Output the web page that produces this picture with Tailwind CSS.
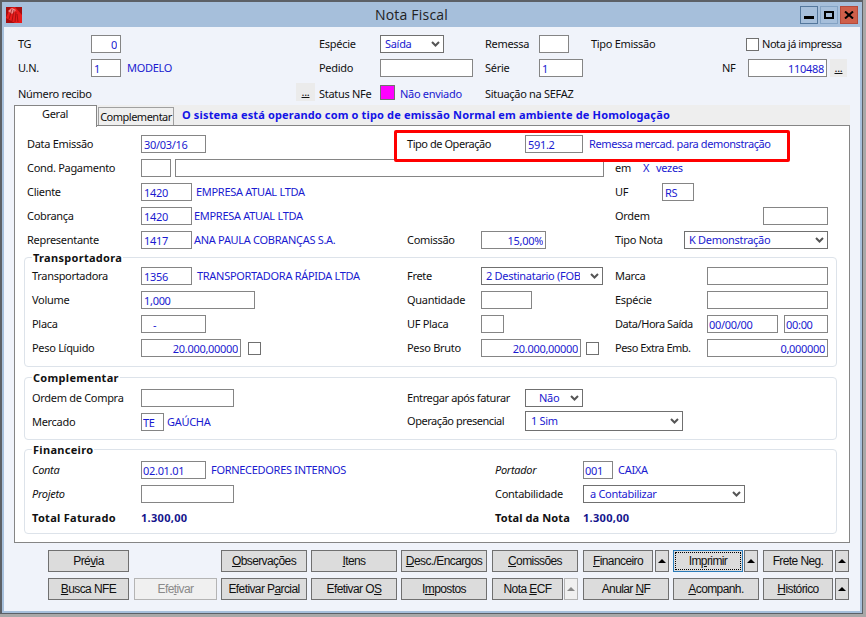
<!DOCTYPE html>
<html lang="pt-BR">
<head>
<meta charset="UTF-8">
<title>Nota Fiscal</title>
<script src="https://cdn.jsdelivr.net/npm/@tailwindcss/browser@4"></script>
</head>
<body class="w-[866px] h-[617px] overflow-hidden bg-[#a8a8a8] font-['Noto_Sans',sans-serif] text-[11px] leading-[14px] tracking-[-0.3px] text-[#111]">
<div class="w-[863px] h-[614px] flex flex-col border-t-2 border-l-2 border-r border-b border-[#5c6066] bg-[#a6bfdb]">

  <!-- barra de titulo -->
  <div class="h-[25px] flex items-center shrink-0 pl-[4px]">
    <svg width="16" height="16" viewBox="0 0 16 16" class="shrink-0">
      <rect width="16" height="16" fill="#a80c0c"/>
      <path d="M0 11 L4 1 L9 0 L16 8 V16 H9 Z" fill="#e81c1c"/>
      <path d="M2 4 L6 1 L10 3 L6 7 Z" fill="#f58a8a"/>
      <path d="M3 12 L6 2 M6 14 L8 3 M9 15 L10 5 M12 15 L11 7" stroke="#7a0606" stroke-width="0.6" fill="none"/>
    </svg>
    <div class="ml-[353px] w-[425px] text-[14px] tracking-[0.2px] text-[#222] font-['Open_Sans',sans-serif]">Nota Fiscal</div>
    <div class="flex gap-[2px]">
      <div class="w-[18px] h-[18px] border border-[#54779c] flex items-end justify-center pb-[4px]"><div class="w-[10px] h-[3px] bg-black"></div></div>
      <div class="w-[18px] h-[18px] border border-[#84a3c4] flex items-center justify-center"><div class="w-[10px] h-[8px] border-2 border-black"></div></div>
      <div class="w-[18px] h-[18px] border border-[#b5493a] bg-[#cf5f4a] flex items-center justify-center">
        <svg width="10" height="8" viewBox="0 0 10 8"><path d="M1 0.5 L9 7.5 M9 0.5 L1 7.5" stroke="#000" stroke-width="2"/></svg>
      </div>
    </div>
  </div>

  <div class="flex-1 mx-[2px] mb-[2px] bg-[#f0f3fa]">
    <!-- cabecalho -->
    <div class="pt-[8px] pl-[14px]">
      <div class="flex items-center h-[18px]">
        <span class="w-[73px]">TG</span>
        <input value="0" class="w-[30px] h-[18px] border border-[#858585] bg-white px-[3px] text-right text-[#1a1ad0]">
        <span class="ml-[198px] w-[61px]">Espécie</span>
        <div class="w-[64px] h-[18px] border border-[#707070] bg-white pl-[4px] pr-[3px] flex items-center justify-between text-[#1a1ad0]">Saída
          <svg width="9" height="6" viewBox="0 0 9 6"><path d="M1 1 L4.5 4.5 L8 1" stroke="#555" stroke-width="2" fill="none"/></svg>
        </div>
        <span class="ml-[41px] w-[54px]">Remessa</span>
        <input class="w-[30px] h-[18px] border border-[#858585] bg-white">
        <span class="ml-[22px] w-[155px]">Tipo Emissão</span>
        <span class="w-[13px] h-[13px] border border-[#707070] bg-white"></span>
        <span class="ml-[3px] tracking-[-0.45px]">Nota já impressa</span>
      </div>
      <div class="flex items-center h-[18px] mt-[6px]">
        <span class="w-[73px]">U.N.</span>
        <input value="1" class="w-[30px] h-[18px] border border-[#858585] bg-white px-[2px] text-[#1a1ad0]">
        <span class="ml-[6px] w-[192px] text-[#1a1ad0]">MODELO</span>
        <span class="w-[61px]">Pedido</span>
        <input class="w-[93px] h-[18px] border border-[#858585] bg-white">
        <span class="ml-[12px] w-[54px]">Série</span>
        <input value="1" class="w-[44px] h-[18px] border border-[#858585] bg-white px-[2px] text-[#1a1ad0]">
        <span class="ml-[139px] w-[26px]">NF</span>
        <input value="110488" class="w-[79px] h-[18px] border border-[#858585] bg-white px-[2px] text-right text-[#1a1ad0]">
        <button class="ml-[3px] w-[17px] h-[18px] bg-[#ebebeb] underline">...</button>
      </div>
      <div class="flex items-center h-[18px] mt-[8px]">
        <span class="w-[278px]">Número recibo</span>
        <button class="w-[19px] h-[18px] -mt-[4px] bg-[#ebebeb] underline">...</button>
        <span class="ml-[4px] w-[61px]">Status NFe</span>
        <span class="w-[15px] h-[15px] self-start border border-[#707070] bg-[#ff00ff]"></span>
        <span class="ml-[5px] w-[85px] text-[#1a1ad0]">Não enviado</span>
        <span>Situação na SEFAZ</span>
      </div>
    </div>

    <!-- abas -->
    <div class="ml-[10px] w-[836px] mt-[2px] h-[20px] bg-[#eeeeee] flex items-start relative">
      <div class="w-[83px] h-[22px] bg-white border border-b-0 border-[#858585] z-10 relative pl-[27px] pt-[1px]">Geral</div>
      <div class="ml-[1px] mt-[2px] w-[76px] h-[18px] bg-[#efefef] border border-b-0 border-[#a0a0a0] text-center pt-[2px] tracking-[-0.5px]">Complementar</div>
      <div class="ml-[8px] mt-[3px] font-bold tracking-[0.15px] text-[#1414e6]">O sistema está operando com o tipo de emissão Normal em ambiente de Homologação</div>
    </div>

    <!-- pagina -->
    <div class="relative ml-[10px] w-[836px] h-[418px] border border-[#858585] bg-white pt-[9px]">
      <div class="absolute left-[379px] top-[4px] w-[396px] h-[32px] border-[3px] border-[#ff0000] rounded-[2px] pointer-events-none"></div>
      <div class="pl-[12px]">
        <div class="flex items-center h-[18px]">
          <span class="w-[114px]">Data Emissão</span>
          <input value="30/03/16" class="w-[65px] h-[18px] border border-[#858585] bg-white px-[2px] text-[#1a1ad0]">
          <span class="ml-[201px] w-[118px] tracking-[-0.45px]">Tipo de Operação</span>
          <input value="591.2" class="w-[58px] h-[18px] border border-[#858585] bg-white px-[2px] text-[#1a1ad0]">
          <span class="ml-[6px] tracking-[-0.4px] text-[#1a1ad0]">Remessa mercad. para demonstração</span>
        </div>
        <div class="flex items-center h-[18px] mt-[6px]">
          <span class="w-[114px]">Cond. Pagamento</span>
          <input class="w-[30px] h-[18px] border border-[#858585] bg-white">
          <input class="ml-[4px] w-[429px] h-[18px] border border-[#858585] bg-white">
          <span class="ml-[11px] w-[28px]">em</span>
          <span class="w-[13px] text-[#1a1ad0]">X</span>
          <span class="text-[#1a1ad0]">vezes</span>
        </div>
        <div class="flex items-center h-[18px] mt-[6px]">
          <span class="w-[114px]">Cliente</span>
          <input value="1420" class="w-[51px] h-[18px] border border-[#858585] bg-white px-[2px] text-[#1a1ad0]">
          <span class="w-[423px] pl-[4px] text-[#1a1ad0]">EMPRESA ATUAL LTDA</span>
          <span class="w-[47px]">UF</span>
          <input value="RS" class="w-[32px] h-[18px] border border-[#858585] bg-white px-[2px] text-[#1a1ad0]">
        </div>
        <div class="flex items-center h-[18px] mt-[6px]">
          <span class="w-[114px]">Cobrança</span>
          <input value="1420" class="w-[51px] h-[18px] border border-[#858585] bg-white px-[2px] text-[#1a1ad0]">
          <span class="w-[423px] pl-[2px] text-[#1a1ad0]">EMPRESA ATUAL LTDA</span>
          <span class="w-[148px]">Ordem</span>
          <input class="w-[65px] h-[18px] border border-[#858585] bg-white">
        </div>
        <div class="flex items-center h-[18px] mt-[6px]">
          <span class="w-[114px]">Representante</span>
          <input value="1417" class="w-[51px] h-[18px] border border-[#858585] bg-white px-[2px] text-[#1a1ad0]">
          <span class="w-[215px] pl-[2px] text-[#1a1ad0]">ANA PAULA COBRANÇAS S.A.</span>
          <span class="w-[74px]">Comissão</span>
          <input value="15,00%" class="w-[65px] h-[18px] border border-[#858585] bg-white px-[2px] text-right text-[#1a1ad0]">
          <span class="ml-[69px] w-[69px]">Tipo Nota</span>
          <div class="w-[144px] h-[18px] border border-[#707070] bg-white pl-[4px] pr-[3px] flex items-center justify-between text-[#1a1ad0]">K Demonstração
            <svg width="9" height="6" viewBox="0 0 9 6"><path d="M1 1 L4.5 4.5 L8 1" stroke="#555" stroke-width="2" fill="none"/></svg>
          </div>
        </div>
      </div>

      <!-- Transportadora -->
      <div class="relative ml-[9px] mt-[8px] w-[813px] h-[110px] border border-[#dde3ea] rounded-[4px] pt-[9px] pl-[7px]">
        <div class="absolute -top-[7px] left-[7px] px-[1px] bg-white font-bold tracking-[0.3px]">Transportadora</div>
        <div class="flex items-center h-[18px]">
          <span class="w-[109px]">Transportadora</span>
          <input value="1356" class="w-[51px] h-[18px] border border-[#858585] bg-white px-[2px] text-[#1a1ad0]">
          <span class="w-[215px] pl-[5px] text-[#1a1ad0]">TRANSPORTADORA RÁPIDA LTDA</span>
          <span class="w-[74px]">Frete</span>
          <div class="w-[122px] h-[18px] border border-[#707070] bg-white pl-[4px] pr-[3px] flex items-center justify-between text-[#1a1ad0]"><span class="w-[94px] overflow-hidden whitespace-nowrap">2 Destinatario (FOB)</span>
            <svg width="9" height="6" viewBox="0 0 9 6"><path d="M1 1 L4.5 4.5 L8 1" stroke="#555" stroke-width="2" fill="none"/></svg>
          </div>
          <span class="ml-[12px] w-[92px]">Marca</span>
          <input class="w-[121px] h-[18px] border border-[#858585] bg-white">
        </div>
        <div class="flex items-center h-[18px] mt-[6px]">
          <span class="w-[109px]">Volume</span>
          <input value="1,000" class="w-[114px] h-[18px] border border-[#858585] bg-white px-[2px] text-[#1a1ad0]">
          <span class="ml-[152px] w-[74px]">Quantidade</span>
          <input class="w-[51px] h-[18px] border border-[#858585] bg-white">
          <span class="ml-[83px] w-[92px]">Espécie</span>
          <input class="w-[121px] h-[18px] border border-[#858585] bg-white">
        </div>
        <div class="flex items-center h-[18px] mt-[6px]">
          <span class="w-[109px]">Placa</span>
          <input value="-" class="w-[65px] h-[18px] border border-[#858585] bg-white pl-[11px] text-[#1a1ad0]">
          <span class="ml-[201px] w-[74px]">UF Placa</span>
          <input class="w-[23px] h-[18px] border border-[#858585] bg-white">
          <span class="ml-[111px] w-[92px] tracking-[-0.45px]">Data/Hora Saída</span>
          <input value="00/00/00" class="w-[71px] h-[18px] border border-[#858585] bg-white px-[1px] text-[#1a1ad0]">
          <input value="00:00" class="ml-[6px] w-[44px] h-[18px] border border-[#858585] bg-white px-[1px] text-[#1a1ad0]">
        </div>
        <div class="flex items-center h-[18px] mt-[6px]">
          <span class="w-[109px]">Peso Líquido</span>
          <input value="20.000,00000" class="w-[100px] h-[18px] border border-[#858585] bg-white px-[2px] text-right text-[#1a1ad0]">
          <span class="ml-[7px] w-[13px] h-[13px] border border-[#707070] bg-white"></span>
          <span class="ml-[146px] w-[74px]">Peso Bruto</span>
          <input value="20.000,00000" class="w-[100px] h-[18px] border border-[#858585] bg-white px-[2px] text-right text-[#1a1ad0]">
          <span class="ml-[5px] w-[13px] h-[13px] border border-[#707070] bg-white"></span>
          <span class="ml-[16px] w-[92px] tracking-[-0.5px]">Peso Extra Emb.</span>
          <input value="0,000000" class="w-[121px] h-[18px] border border-[#858585] bg-white px-[2px] text-right text-[#1a1ad0]">
        </div>
      </div>

      <!-- Complementar -->
      <div class="relative ml-[9px] mt-[10px] w-[813px] h-[63px] border border-[#dde3ea] rounded-[4px] pt-[11px] pl-[7px]">
        <div class="absolute -top-[7px] left-[7px] px-[1px] bg-white font-bold tracking-[0.3px]">Complementar</div>
        <div class="flex items-center h-[18px]">
          <span class="w-[109px]">Ordem de Compra</span>
          <input class="w-[93px] h-[18px] border border-[#858585] bg-white">
          <span class="ml-[173px] w-[118px] tracking-[-0.4px]">Entregar após faturar</span>
          <div class="w-[58px] h-[18px] border border-[#707070] bg-white pl-[13px] pr-[3px] flex items-center justify-between text-[#1a1ad0]">Não
            <svg width="9" height="6" viewBox="0 0 9 6"><path d="M1 1 L4.5 4.5 L8 1" stroke="#555" stroke-width="2" fill="none"/></svg>
          </div>
        </div>
        <div class="flex items-center h-[20px] mt-[4px]">
          <span class="w-[109px] mt-[2px]">Mercado</span>
          <input value="TE" class="w-[23px] h-[18px] self-end border border-[#858585] bg-white px-[1px] text-[#1a1ad0]">
          <span class="w-[243px] pl-[3px] mt-[2px] text-[#1a1ad0]">GAÚCHA</span>
          <span class="w-[118px] tracking-[-0.45px]">Operação presencial</span>
          <div class="w-[158px] h-[20px] border border-[#707070] bg-white pl-[5px] pr-[3px] flex items-center justify-between text-[#1a1ad0]">1 Sim
            <svg width="9" height="6" viewBox="0 0 9 6"><path d="M1 1 L4.5 4.5 L8 1" stroke="#555" stroke-width="2" fill="none"/></svg>
          </div>
        </div>
      </div>

      <!-- Financeiro -->
      <div class="relative ml-[9px] mt-[9px] w-[813px] h-[85px] border border-[#dde3ea] rounded-[4px] pt-[11px] pl-[7px]">
        <div class="absolute -top-[7px] left-[7px] px-[1px] bg-white font-bold tracking-[0.3px]">Financeiro</div>
        <div class="flex items-center h-[18px]">
          <span class="w-[109px] italic">Conta</span>
          <input value="02.01.01" class="w-[65px] h-[18px] border border-[#858585] bg-white px-[1px] text-[#1a1ad0]">
          <span class="w-[289px] pl-[5px] text-[#1a1ad0]">FORNECEDORES INTERNOS</span>
          <span class="w-[88px] italic">Portador</span>
          <input value="001" class="w-[30px] h-[18px] border border-[#858585] bg-white px-[1px] text-[#1a1ad0]">
          <span class="pl-[5px] text-[#1a1ad0]">CAIXA</span>
        </div>
        <div class="flex items-center h-[18px] mt-[6px]">
          <span class="w-[109px] italic">Projeto</span>
          <input class="w-[93px] h-[18px] border border-[#858585] bg-white">
          <span class="ml-[261px] w-[88px]">Contabilidade</span>
          <div class="w-[162px] h-[18px] border border-[#707070] bg-white pl-[6px] pr-[3px] flex items-center justify-between text-[#1a1ad0]">a Contabilizar
            <svg width="9" height="6" viewBox="0 0 9 6"><path d="M1 1 L4.5 4.5 L8 1" stroke="#555" stroke-width="2" fill="none"/></svg>
          </div>
        </div>
        <div class="flex items-center h-[18px] mt-[6px] font-bold tracking-[0.3px]">
          <span class="w-[109px]">Total Faturado</span>
          <span class="w-[354px] text-[#14148c]">1.300,00</span>
          <span class="w-[88px] tracking-[0.1px]">Total da Nota</span>
          <span class="text-[#14148c]">1.300,00</span>
        </div>
      </div>
    </div>

    <!-- botoes -->
    <div class="pl-[44px] pt-[7px] font-['Liberation_Sans',sans-serif] text-[12px] tracking-[-0.6px]">
      <div class="flex h-[22px]">
        <button class="w-[81px] border border-[#707070] bg-[#dcdcdc]">Pré<u>v</u>ia</button>
        <button class="ml-[92px] w-[86px] border border-[#707070] bg-[#dcdcdc]"><u>O</u>bservações</button>
        <button class="ml-[4px] w-[86px] border border-[#707070] bg-[#dcdcdc]"><u>I</u>tens</button>
        <button class="ml-[4px] w-[86px] border border-[#707070] bg-[#dcdcdc]"><u>D</u>esc./Encargos</button>
        <button class="ml-[5px] w-[86px] border border-[#707070] bg-[#dcdcdc]"><u>C</u>omissões</button>
        <button class="ml-[5px] w-[70px] border border-[#707070] bg-[#dcdcdc]"><u>F</u>inanceiro</button>
        <button class="ml-[2px] w-[14px] border border-[#707070] bg-[#dcdcdc] flex items-center justify-center"><svg width="8" height="4" viewBox="0 0 8 4"><path d="M4 0 L8 4 H0 Z" fill="#000"/></svg></button>
        <button class="ml-[4px] w-[70px] border border-[#2a7ab8] bg-[#dcdcdc] outline-1 outline-dotted outline-black [outline-offset:-3px]">Im<u>p</u>rimir</button>
        <button class="ml-[1px] w-[14px] border border-[#707070] bg-[#dcdcdc] flex items-center justify-center"><svg width="8" height="4" viewBox="0 0 8 4"><path d="M4 0 L8 4 H0 Z" fill="#000"/></svg></button>
        <button class="ml-[5px] w-[70px] border border-[#707070] bg-[#dcdcdc]">Frete Neg.</button>
        <button class="ml-[2px] w-[14px] border border-[#707070] bg-[#dcdcdc] flex items-center justify-center"><svg width="8" height="4" viewBox="0 0 8 4"><path d="M4 0 L8 4 H0 Z" fill="#000"/></svg></button>
      </div>
      <div class="flex h-[22px] mt-[6px]">
        <button class="w-[81px] border border-[#707070] bg-[#dcdcdc]"><u>B</u>usca NFE</button>
        <button class="ml-[5px] w-[83px] border border-[#b4b4b4] bg-[#f0f0f0] text-[#8a8a8a]">Efe<u>t</u>ivar</button>
        <button class="ml-[4px] w-[86px] border border-[#707070] bg-[#dcdcdc]">Efetivar P<u>a</u>rcial</button>
        <button class="ml-[4px] w-[86px] border border-[#707070] bg-[#dcdcdc]">Efetivar O<u>S</u></button>
        <button class="ml-[4px] w-[86px] border border-[#707070] bg-[#dcdcdc]">I<u>m</u>postos</button>
        <button class="ml-[5px] w-[71px] border border-[#707070] bg-[#dcdcdc]">Nota <u>E</u>CF</button>
        <button class="ml-[1px] w-[14px] border border-[#b4b4b4] bg-[#f0f0f0] flex items-center justify-center"><svg width="8" height="4" viewBox="0 0 8 4"><path d="M4 0 L8 4 H0 Z" fill="#8a8a8a"/></svg></button>
        <button class="ml-[5px] w-[86px] border border-[#707070] bg-[#dcdcdc]">Anular <u>N</u>F</button>
        <button class="ml-[4px] w-[86px] border border-[#707070] bg-[#dcdcdc]"><u>A</u>companh.</button>
        <button class="ml-[4px] w-[70px] border border-[#707070] bg-[#dcdcdc]"><u>H</u>istórico</button>
        <button class="ml-[2px] w-[14px] border border-[#707070] bg-[#dcdcdc] flex items-center justify-center"><svg width="8" height="4" viewBox="0 0 8 4"><path d="M4 0 L8 4 H0 Z" fill="#000"/></svg></button>
      </div>
    </div>
  </div>
</div>
</body>
</html>
